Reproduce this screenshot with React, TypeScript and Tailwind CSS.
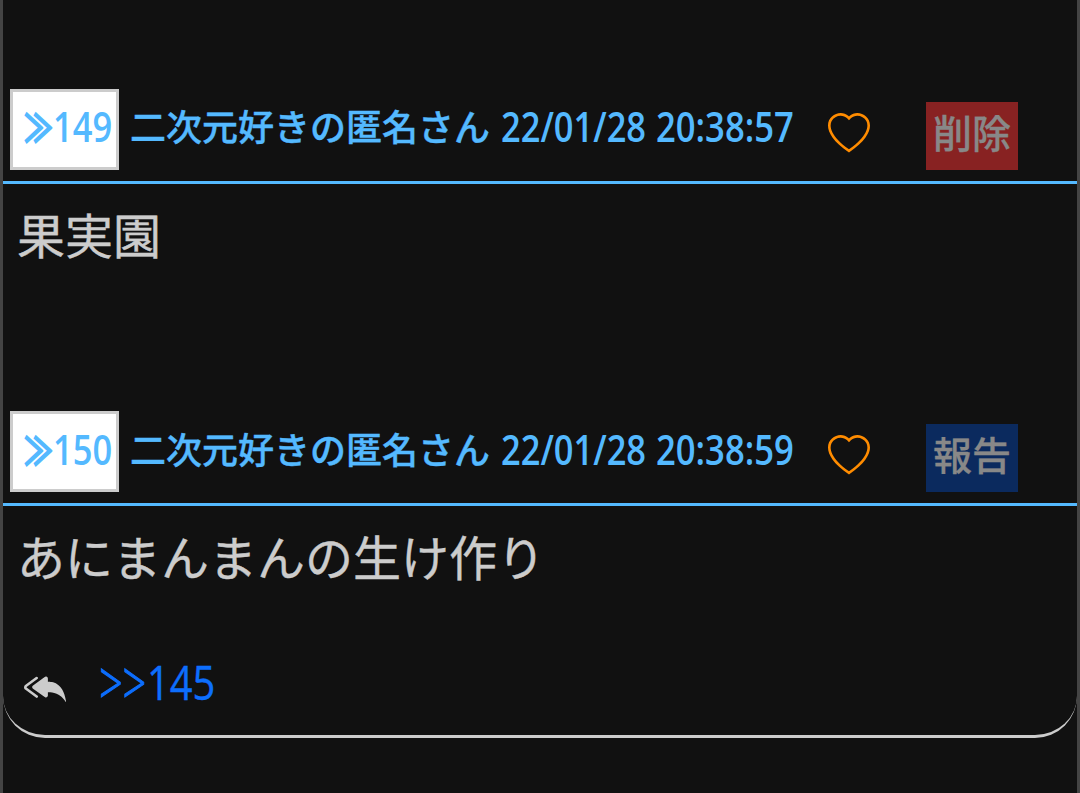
import type { ReactNode } from "react"
import { BsHeart, BsReplyAllFill } from "react-icons/bs"
import clsx from "clsx"

const jp = "font-['Noto_Sans_CJK_JP',sans-serif]"
const latin = "font-['Open_Sans','Noto_Sans_CJK_JP',sans-serif]"

type PostProps = {
  no: number
  name: string
  date: string
  time: string
  action: "削除" | "報告"
  last?: boolean
  children: ReactNode
}

function Post({ no, name, date, time, action, last, children }: PostProps) {
  return (
    <article
      className={clsx(
        "flex flex-col",
        last ? "h-[330px] rounded-b-[42px] border-b-[3px] border-[#ccc]" : "h-[322px]"
      )}
    >
      <header className="flex h-[98px] shrink-0 items-start border-b-[3px] border-[#54b9ff] whitespace-nowrap text-[#54b9ff]">
        <button className={clsx("mt-[3px] ml-[7px] flex h-[81px] w-[109px] shrink-0 border-[3px] border-[#ccc] bg-white", last && "pt-px")}>
          <span className={clsx(jp, "mt-[14px] ml-[11px] h-[38px] w-[29px] origin-left scale-x-[0.8] scale-y-[1.06] text-[36px] leading-[38px] font-medium [-webkit-text-stroke:1.8px_#54b9ff]")}>≫</span>
          <span className={clsx(latin, "mt-[13px] h-[42px] origin-left scale-x-[0.84] text-[41px] leading-[42px] font-semibold")}>{no}</span>
        </button>
        <span className={clsx(jp, last ? "mt-[21px]" : "mt-[20px]", "ml-[11px] h-[38px] w-[360px] shrink-0 text-[36px] leading-[38px] font-medium [-webkit-text-stroke:0.4px_#54b9ff]")}>{name}</span>
        <time className={clsx(latin, last ? "mt-[20px]" : "mt-[19px]", "ml-[11px] flex h-[42px] w-[320px] shrink-0 text-[41px] leading-[42px] font-semibold")}>
          <span className="w-[155px] shrink-0 origin-left scale-x-[0.84]">{date}</span>
          <span className="origin-left scale-x-[0.845]">{time}</span>
        </time>
        <BsHeart className="mt-[27px] ml-[7px] size-[42px] shrink-0 text-[#ff8c00]" />
        <button
          className={clsx(
            jp,
            "mt-[16px] ml-[56px] flex h-[68px] w-[92px] shrink-0 justify-center pt-[9px] text-[39px] leading-[40px] font-medium text-[#888] [-webkit-text-stroke:0.3px_#888]",
            action === "削除" ? "bg-[#882222]" : "bg-[#0b2a5e]"
          )}
        >
          {action}
        </button>
      </header>
      {children}
    </article>
  )
}

function Body({ children }: { children: ReactNode }) {
  return (
    <p className={clsx(jp, "mt-[25px] ml-[14px] h-[48px] text-[48px] leading-[48px] text-[#ccc] [-webkit-text-stroke:0.4px_#ccc]")}>
      {children}
    </p>
  )
}

export default function App() {
  return (
    <main className="h-[793px] overflow-hidden border-x-[3px] border-[#444] bg-[#111] pt-[86px]">
      <Post no={149} name="二次元好きの匿名さん" date="22/01/28" time="20:38:57" action="削除">
        <Body>果実園</Body>
      </Post>
      <Post no={150} name="二次元好きの匿名さん" date="22/01/28" time="20:38:59" action="報告" last>
        <Body>あにまんまんの生け作り</Body>
        <div className="mt-[79px] ml-[21px] flex items-start">
          <BsReplyAllFill className="mt-[8px] size-[42px] text-[#ccc]" />
          <a className={clsx(latin, "ml-[33px] flex h-[48px] text-[48px] leading-[48px] text-[#0d6efd]")}>
            <span className="w-[48px] origin-left scale-x-[0.86] scale-y-[1.25] font-light [-webkit-text-stroke:0.9px_#0d6efd]">&gt;&gt;</span>
            <span className="origin-left scale-x-[0.83] [-webkit-text-stroke:0.4px_#0d6efd]">145</span>
          </a>
        </div>
      </Post>
    </main>
  )
}
